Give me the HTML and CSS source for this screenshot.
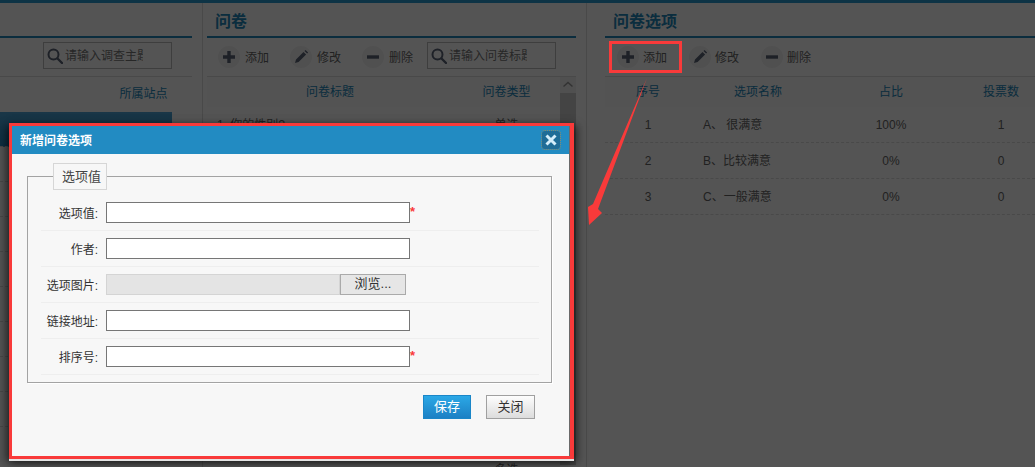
FILE: index.html
```html
<!DOCTYPE html>
<html lang="zh">
<head>
<meta charset="utf-8">
<title>新增问卷选项</title>
<link rel="stylesheet" href="styles.css">
</head>
<body>
<div class="page">
  <div class="topbar"></div>
  <div class="columns">
    <section class="col col-left">
      <h2 class="heading"></h2>
      <div class="toolbar toolbar-left">
        <label class="search">
          <svg class="search-icon" viewBox="0 0 16 16"><circle cx="6.5" cy="6.5" r="5" fill="none" stroke="#5b6478" stroke-width="2"/><path d="M10.5 10.5 15 15" stroke="#5b6478" stroke-width="2.4" stroke-linecap="round"/></svg>
          <input class="search-input" placeholder="请输入调查主题">
        </label>
      </div>
      <div class="thead thead-left"><span class="th">所属站点</span></div>
      <div class="left-body">
        <div class="left-row selected"></div>
        <div class="left-row"></div>
        <div class="left-row"></div>
        <div class="left-row"></div>
        <div class="left-row"></div>
        <div class="left-row"></div>
        <div class="left-row"></div>
        <div class="left-row"></div>
        <div class="left-row"></div>
      </div>
    </section>

    <section class="col col-mid">
      <h2 class="heading">问卷</h2>
      <div class="toolbar">
        <span class="tool">
          <span class="tool-icon"><svg viewBox="0 0 22 22"><path d="M11 5v12M5 11h12" stroke="#5b6478" stroke-width="3.4"/></svg></span><span class="tool-text">添加</span>
        </span>
        <span class="tool">
          <span class="tool-icon"><svg viewBox="0 0 22 22"><path d="M6 13.5 13.5 6l2.6 2.6-7.5 7.5-3.6 1zM14.5 5l1-1 2.6 2.6-1 1z" fill="#5b6478"/></svg></span><span class="tool-text">修改</span>
        </span>
        <span class="tool">
          <span class="tool-icon"><svg viewBox="0 0 22 22"><path d="M5 11h12" stroke="#5b6478" stroke-width="3.4"/></svg></span><span class="tool-text">删除</span>
        </span>
        <label class="search search-mid">
          <svg class="search-icon" viewBox="0 0 16 16"><circle cx="6.5" cy="6.5" r="5" fill="none" stroke="#5b6478" stroke-width="2"/><path d="M10.5 10.5 15 15" stroke="#5b6478" stroke-width="2.4" stroke-linecap="round"/></svg>
          <input class="search-input" placeholder="请输入问卷标题">
        </label>
      </div>
      <div class="mid-table">
        <div class="mid-main">
          <div class="thead mid-grid"><span class="th">问卷标题</span><span class="th">问卷类型</span></div>
          <div class="tr mid-grid"><span class="td-left">1. 你的性别?</span><span class="td">单选</span></div>
          <div class="tr mid-grid mid-last"><span></span><span class="td">多选</span></div>
        </div>
        <div class="scrollbar">
          <div class="scroll-btn"><svg viewBox="0 0 16 16"><path d="M3.5 9.5 8 5.5l4.5 4" fill="none" stroke="#999" stroke-width="1.5"/></svg></div>
          <div class="scroll-thumb"></div>
        </div>
      </div>
    </section>

    <section class="col col-right">
      <h2 class="heading">问卷选项</h2>
      <div class="toolbar toolbar-right">
        <span class="tool">
          <span class="tool-icon"><svg viewBox="0 0 22 22"><path d="M11 5v12M5 11h12" stroke="#5b6478" stroke-width="3.4"/></svg></span><span class="tool-text">添加</span>
        </span>
        <span class="tool">
          <span class="tool-icon"><svg viewBox="0 0 22 22"><path d="M6 13.5 13.5 6l2.6 2.6-7.5 7.5-3.6 1zM14.5 5l1-1 2.6 2.6-1 1z" fill="#5b6478"/></svg></span><span class="tool-text">修改</span>
        </span>
        <span class="tool">
          <span class="tool-icon"><svg viewBox="0 0 22 22"><path d="M5 11h12" stroke="#5b6478" stroke-width="3.4"/></svg></span><span class="tool-text">删除</span>
        </span>
      </div>
      <div class="thead right-grid">
        <span class="th">序号</span><span class="th">选项名称</span><span class="th">占比</span><span class="th th-votes">投票数</span>
      </div>
      <div class="tr right-grid dashed"><span class="td">1</span><span class="td-name">A、 很满意</span><span class="td">100%</span><span class="td th-votes">1</span></div>
      <div class="tr right-grid dashed"><span class="td">2</span><span class="td-name">B、比较满意</span><span class="td">0%</span><span class="td th-votes">0</span></div>
      <div class="tr right-grid dashed"><span class="td">3</span><span class="td-name">C、一般满意</span><span class="td">0%</span><span class="td th-votes">0</span></div>
    </section>
  </div>

  <div class="mask"></div>

  <div class="dialog">
    <div class="dialog-title">
      <span class="dialog-name">新增问卷选项</span>
      <span class="dialog-close"><svg viewBox="0 0 18 18"><path d="M4.5 4.5l9 9M13.5 4.5l-9 9" stroke="#d4eefa" stroke-width="3"/></svg></span>
    </div>
    <div class="dialog-body">
      <fieldset class="group">
        <legend class="group-legend">选项值</legend>
        <div class="form-row"><span class="form-label">选项值:</span><input class="text-input"><span class="required">*</span></div>
        <div class="form-row"><span class="form-label">作者:</span><input class="text-input"></div>
        <div class="form-row"><span class="form-label">选项图片:</span><span class="file-path"></span><span class="file-btn">浏览...</span></div>
        <div class="form-row"><span class="form-label">链接地址:</span><input class="text-input"></div>
        <div class="form-row"><span class="form-label">排序号:</span><input class="text-input"><span class="required">*</span></div>
      </fieldset>
      <div class="actions">
        <span class="btn btn-save">保存</span>
        <span class="btn btn-close">关闭</span>
      </div>
    </div>
  </div>

  <div class="callout-box"></div>
  <svg class="callout-arrow" viewBox="0 0 1035 467"><polygon points="647,78 598,209 602,213 589,225 588,207 593,204" fill="#f93a3a"/></svg>
</div>
</body>
</html>
```

FILE: styles.css
```css
* { box-sizing: border-box; }
html, body { margin: 0; padding: 0; height: 100%; }
body {
  font-family: "Liberation Sans", "Noto Sans CJK SC", sans-serif;
  font-size: 12px;
  color: #666;
  background: #fff;
  overflow: hidden;
}
.page { position: relative; width: 1035px; height: 467px; overflow: hidden; }
.topbar { height: 3px; background: #2a9bd0; }
.columns { display: flex; height: 464px; }
.col { height: 100%; overflow: hidden; }
.col-left { width: 203px; padding-right: 10px; border-right: 1px solid #dcdcdc; }
.col-mid { width: 384px; padding: 0 10px 0 4px; border-right: 1px solid #dcdcdc; }
.col-right { flex: 1; padding-left: 18px; }
.heading {
  margin: 0;
  height: 35px;
  padding: 3px 0 0 8px;
  font-size: 16px;
  line-height: 32px;
  font-weight: bold;
  color: #2288bb;
  border-bottom: 2px solid #2288bb;
}
.toolbar {
  display: flex;
  align-items: center;
  gap: 21px;
  height: 39px;
  padding: 0 0 0 11px;
  border-bottom: 1px solid #dedede;
}
.toolbar-left { padding-left: 43px; }
.toolbar-right { gap: 22px; padding-left: 12px; }
.tool { display: flex; align-items: center; gap: 5px; color: #666; }
.toolbar-right .tool { gap: 4px; }
.tool-text { margin-bottom: 2px; }
.tool-icon {
  display: block;
  width: 22px;
  height: 22px;
  border-radius: 50%;
  background: #f2f2f2;
}
.tool-icon svg { display: block; width: 22px; height: 22px; }
.search {
  display: flex;
  align-items: center;
  gap: 2px;
  width: 129px;
  height: 27px;
  margin-bottom: 3px;
  padding-left: 3px;
  border: 1px solid #bbb;
}
.search-mid { margin-left: -7px; }
.search-icon { width: 16px; height: 16px; flex: none; }
.search-input {
  width: 78px;
  padding: 0;
  border: 0;
  outline: 0;
  background: transparent;
  font: 12px "Liberation Sans", "Noto Sans CJK SC", sans-serif;
}
.search-input::placeholder { color: #777; opacity: 1; }
.thead { height: 30px; line-height: 30px; background: #fafafa; text-align: center; }
.thead-left { height: 35px; line-height: 35px; padding-left: 115px; background: transparent; }
.thead-left .th { display: block; width: 57px; }
.th { color: #2288bb; }
.left-row { height: 35px; width: 172px; border-bottom: 1px dashed #ddd; }
.left-row.selected { background: linear-gradient(#4fa5d8, #2b8fc6); }
.mid-table { display: flex; height: 388px; }
.mid-main { flex: 1; }
.mid-grid { display: grid; grid-template-columns: 246px 107px; }
.scrollbar { width: 16px; display: flex; flex-direction: column; background: #f1f1f1; }
.scroll-btn { height: 16px; }
.scroll-btn svg { display: block; width: 16px; height: 16px; }
.scroll-thumb { flex: 1; background: #cdcdcd; }
.tr { height: 36px; line-height: 36px; }
.mid-last { margin-top: 309px; }
.td { text-align: center; }
.td-left { padding-left: 10px; }
.td-name { padding-left: 12px; }
.right-grid { display: grid; grid-template-columns: 86px 134px 132px 78px; }
.th-votes { padding-left: 10px; }
.dashed { border-bottom: 1px dashed #ddd; }
.mask { position: absolute; inset: 0; background: rgba(0, 0, 0, .67); }
.dialog {
  position: absolute;
  left: 9px;
  top: 123px;
  width: 565px;
  height: 336px;
  border: solid #f93a3a;
  border-width: 3px 4px 3px 3px;
  background: #f7f7f7;
  box-shadow: 0 2px 0 #e4e4e4, -3px 3px 8px rgba(0, 0, 0, .5), 3px 3px 8px rgba(0, 0, 0, .5);
}
.dialog-title {
  display: flex;
  align-items: center;
  justify-content: space-between;
  height: 28px;
  padding: 0 9px 1px 8px;
  background: #228bc2;
  color: #fff;
  font-weight: bold;
  border-right: 1px solid #6a6a6a;
}
.dialog-close {
  display: block;
  width: 18px;
  height: 18px;
  border-radius: 3px;
  background: #1f6d97;
  outline: 1px dotted #8a8a6a;
}
.dialog-close svg { display: block; width: 18px; height: 18px; }
.dialog-body { height: 302px; padding: 9px 17px 0 15px; border-right: 1px solid #6a6a6a; }
.group {
  margin: 0;
  padding: 5px 12px 7px 13px;
  width: 525px;
  border: 1px solid #a3a3a3;
  box-shadow: 1px 1px 0 #fff;
}
.group-legend {
  margin-left: 12px;
  padding: 0 0 0 8px;
  width: 54px;
  height: 27px;
  line-height: 26px;
  text-align: left;
  border: 1px solid #d6d6d6;
  background: #f7f7f7;
  color: #444;
  font-size: 13px;
}
.form-row {
  display: flex;
  align-items: center;
  height: 36px;
  border-bottom: 1px solid #eee;
  color: #333;
}
.form-label { width: 57px; margin-right: 8px; text-align: right; }
.text-input {
  width: 304px;
  height: 21px;
  padding: 0 2px;
  border: 1px solid #767676;
  border-radius: 0;
  outline: 0;
  background: #fff;
}
.required { color: #f93a3a; font-size: 13px; line-height: 14px; margin-bottom: 2px; font-weight: bold; }
.file-path {
  display: block;
  width: 234px;
  height: 21px;
  background: #e4e4e4;
  border: 1px solid #d4d4d4;
}
.file-btn {
  display: block;
  width: 66px;
  height: 21px;
  line-height: 18px;
  text-align: center;
  font-size: 13px;
  background: #e6e6e6;
  border: 1px solid #aaa;
  color: #333;
}
.actions { display: flex; justify-content: flex-end; gap: 15px; margin-top: 12px; padding-right: 17px; }
.btn {
  display: block;
  height: 24px;
  line-height: 22px;
  text-align: center;
  font-size: 13px;
}
.btn-save {
  width: 48px;
  color: #fff;
  border: 1px solid #1a86c8;
  background: linear-gradient(#2ba8e6, #1c80c4);
}
.btn-close {
  width: 49px;
  color: #333;
  border: 1px solid #a0a0a0;
  background: linear-gradient(#fdfdfd, #dcdcdc);
}
.callout-box {
  position: absolute;
  left: 609px;
  top: 41px;
  width: 73px;
  height: 32px;
  border: 3px solid #f93a3a;
}
.callout-arrow { position: absolute; left: 0; top: 0; width: 1035px; height: 467px; pointer-events: none; }
```
